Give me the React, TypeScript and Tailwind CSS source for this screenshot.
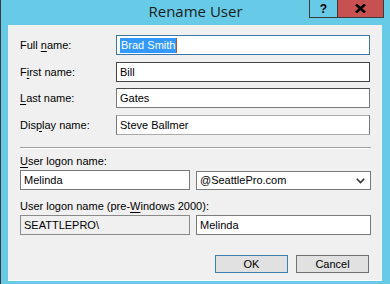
import React from "react";

const U = ({ children }: { children: React.ReactNode }) => (
  <span className="underline underline-offset-[2px] decoration-[1px]">{children}</span>
);

function Box({
  children,
  className = "",
}: {
  children?: React.ReactNode;
  className?: string;
}) {
  return (
    <div
      className={`h-[20px] flex items-center pl-[3px] bg-white border leading-none ${className}`}
    >
      {children}
    </div>
  );
}

export default function App() {
  return (
    <div
      className="w-[390px] h-[284px] bg-[#67cbe8] border-l border-[#3a3a3a] flex flex-col overflow-hidden text-black"
      style={{ fontFamily: '"Liberation Sans", Arial, sans-serif' }}
    >
      {/* title bar */}
      <div className="h-[25px] relative flex items-center justify-center shrink-0">
        <div
          className="text-[15px] text-[#1b1b1b] pb-[2px]"
          style={{ fontFamily: '"Open Sans", "Noto Sans", sans-serif' }}
        >
          Rename User
        </div>
        <div className="absolute right-[6px] top-[-1px] flex">
          <div className="w-[29px] h-[19px] border border-[#3a3a3a] flex items-center justify-center text-[12px] font-bold leading-none">
            ?
          </div>
          <div className="w-[46px] h-[19px] bg-[#c75050] border border-l-0 border-[#3a3a3a] flex items-center justify-center">
            <svg width="11" height="9" viewBox="0 0 11 9">
              <path d="M1 0.5 L10 8.5 M10 0.5 L1 8.5" stroke="#000" strokeWidth="2.6" />
            </svg>
          </div>
        </div>
      </div>

      {/* client */}
      <div className="ml-[7px] mr-[8px] h-[256px] bg-[#f0f0f0] border-b border-[#fbfbfb] px-[12px] pt-[10px] text-[11px]">
        <div className="flex flex-col">
          <div className="flex items-center">
            <div className="w-[96px]">
              Full <U>n</U>ame:
            </div>
            <Box className="flex-1 border-[#3a78a8]">
              <span className="bg-[#3399ff] text-white px-[1px] py-[2px]">Brad Smith</span>
              <span className="w-[1px] h-[15px] bg-[#b05a20]" />
            </Box>
          </div>
          <div className="flex items-center mt-[7px]">
            <div className="w-[96px]">
              F<U>i</U>rst name:
            </div>
            <Box className="flex-1 border-[#444444]">Bill</Box>
          </div>
          <div className="flex items-center mt-[6px]">
            <div className="w-[96px]">
              <U>L</U>ast name:
            </div>
            <Box className="flex-1 border-[#7a7a7a] border-t-[#4a4a4a]">Gates</Box>
          </div>
          <div className="flex items-center mt-[7px]">
            <div className="w-[96px]">
              Dis<U>p</U>lay name:
            </div>
            <Box className="flex-1 border-[#7a7a7a] border-t-[#ababab] border-b-[#ababab]">
              Steve Ballmer
            </Box>
          </div>
        </div>

        {/* separator */}
        <div className="mt-[12px] h-[2px] border-t border-[#a0a0a0] border-b border-b-white mr-[-1px]" />

        <div className="mt-[7px] leading-none">
          <U>U</U>ser logon name:
        </div>
        <div className="flex mt-[3px] gap-[6px]">
          <Box className="w-[170px] h-[19px] border-[#7a7a7a]">Melinda</Box>
          <div className="flex-1 h-[19px] mt-[1px] mr-[-1px] bg-white border border-[#7a7a7a] flex items-center justify-between pl-[3px] pr-[5px]">
            <span>@SeattlePro.com</span>
            <svg width="9" height="6" viewBox="0 0 9 6">
              <path d="M0.8 0.8 L4.5 4.5 L8.2 0.8" stroke="#333" strokeWidth="1.6" fill="none" />
            </svg>
          </div>
        </div>

        <div className="mt-[11px] leading-none">
          User logon name (pre-<U>W</U>indows 2000):
        </div>
        <div className="flex mt-[3px] gap-[6px]">
          <Box className="w-[170px] h-[19px] !bg-[#f0f0f0] border-[#8a8a8a]">SEATTLEPRO\</Box>
          <Box className="flex-1 h-[19px] mr-[-1px] border-[#7a7a7a]">Melinda</Box>
        </div>

        <div className="flex justify-end gap-[8px] mt-[20px] mr-[1px]">
          <div className="w-[73px] h-[18px] bg-[#e1e1e1] border border-[#3c7fb1] flex items-center justify-center">
            OK
          </div>
          <div className="w-[73px] h-[18px] bg-[#e1e1e1] border border-[#707070] flex items-center justify-center">
            Cancel
          </div>
        </div>
      </div>
    </div>
  );
}
